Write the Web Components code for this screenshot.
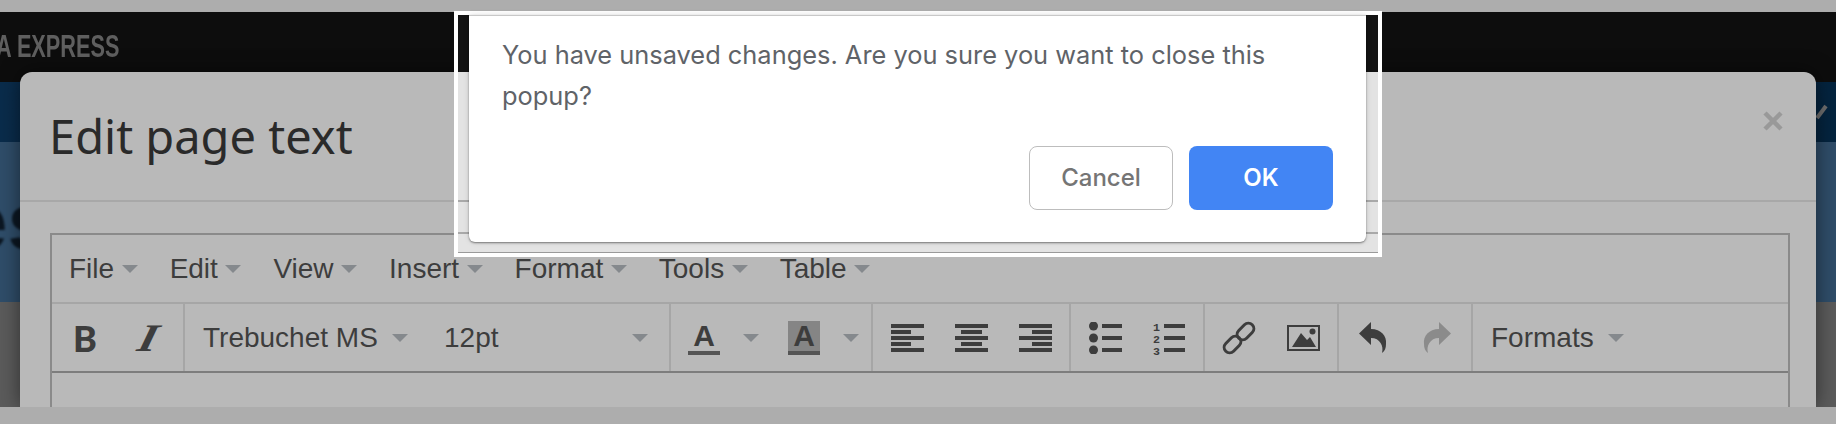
<!DOCTYPE html>
<html>
<head>
<meta charset="utf-8">
<title>Edit page text</title>
<style>
html, body { margin: 0; height: 424px; overflow: hidden; background: #adadad; }
body { font-family: "Liberation Sans", Arial, sans-serif; }
</style>
</head>
<body>
<site-page>
  <edit-modal slot="modal" title-text="Edit page text">
    <text-editor></text-editor>
  </edit-modal>
  <confirm-box slot="confirm">You have unsaved changes. Are you sure you want to close this popup?</confirm-box>
</site-page>

<script>
const caretCss = `
  .caret { width: 0; height: 0; border-left: 8px solid transparent; border-right: 8px solid transparent; border-top: 8px solid #85898d; flex: none; }
`;

class SitePage extends HTMLElement {
    constructor() {
        super();
        this.attachShadow({ mode: "open" });
        this.shadowRoot.innerHTML = `
        <style>
        :host { display: flex; flex-direction: column; position: relative; width: 1836px; height: 424px; overflow: hidden; }
        .strip { height: 12px; background: #adadad; flex: none; }
        .strip.bottom { height: 17px; position: relative; z-index: 2; }
        .brand { height: 70px; background: #0d0d0d; flex: none; color: #5f5f5f; display: flex; padding-top: 17px; box-sizing: border-box; overflow: hidden; }
        .brand span { font: bold 31px/36px "Liberation Sans", sans-serif; white-space: nowrap; margin-left: -4px; transform: scaleX(.7); transform-origin: left; filter: blur(.4px); }
        .nav { height: 60px; flex: none; background: linear-gradient(90deg, #0a2c4b, #04243f); overflow: hidden; display: flex; justify-content: flex-end; }
        .nav svg { margin: 18px 0 0; }
        .hero { height: 160px; flex: none; background: #2f4d69; overflow: hidden; color: #0c1722; }
        .hero span { display: block; font: bold 80px/70px "Liberation Sans", sans-serif; margin: 45px 0 0 -37px; filter: blur(.8px); }
        .rest { flex: 1; background: #5b5b5b; }
        </style>
        <div class="strip"></div>
        <div class="brand"><span>A EXPRESS</span></div>
        <div class="nav"><svg width="20" height="24" viewBox="0 0 20 24"><path d="M1 18 L10 6" stroke="#6f6f6f" stroke-width="4" fill="none"/></svg></div>
        <div class="hero"><span>es</span></div>
        <div class="rest"></div>
        <div class="strip bottom"></div>
        <slot name="modal"></slot>
        <slot name="confirm"></slot>
        `;
    }
}

class EditModal extends HTMLElement {
    constructor() {
        super();
        this.attachShadow({ mode: "open" });
        this.shadowRoot.innerHTML = `
        <style>
        :host { display: block; position: absolute; left: 20px; top: 72px; width: 1796px; height: 335px; background: #b9b9b9; border-radius: 12px 12px 0 0; box-shadow: 0 0 20px rgba(0,0,0,.5); z-index: 1; }
        .inner { height: 100%; overflow: hidden; display: flex; flex-direction: column; }
        header { height: 128px; flex: none; border-bottom: 2px solid #a8a8a8; display: flex; align-items: center; justify-content: space-between; padding: 0 33px 0 29px; }
        h1 { margin: 0; font: 400 47px/60px "Noto Sans", Lato, sans-serif; color: #2a2a2a; }
        .close { margin: 0 0 30px; display: block; }
        .body { padding: 31px 26px 0 30px; flex: 1; }
        </style>
        <div class="inner">
          <header>
            <h1>${this.getAttribute("title-text")}</h1>
            <svg class="close" width="20" height="20" viewBox="0 0 20 20"><path d="M2 2 L18 18 M18 2 L2 18" stroke="#999" stroke-width="4.5"/></svg>
          </header>
          <div class="body"><slot></slot></div>
        </div>
        `;
    }
}

class TextEditor extends HTMLElement {
    constructor() {
        super();
        this.attachShadow({ mode: "open" });
        const menus = ["File", "Edit", "View", "Insert", "Format", "Tools", "Table"];
        const digit = (n, y) => `<text x="0" y="${y}" font-family="Liberation Mono" font-weight="bold" font-size="10.500" textLength="7" lengthAdjust="spacingAndGlyphs">${n}</text>`;
        this.shadowRoot.innerHTML = `
        <style>
        :host { display: block; border: 2px solid #8a8a8a; border-bottom: 0; height: 200px; color: #3d3d3d; font: 28px/34px "Liberation Sans", Arial, sans-serif; }
        ${caretCss}
        .menubar { height: 69px; box-sizing: border-box; border-bottom: 2px solid #a6a6a6; display: flex; padding-left: 1px; }
        .menu { display: flex; align-items: center; gap: 7.500px; padding: 0 16px; }
        .toolbar { height: 69px; box-sizing: border-box; border-bottom: 2px solid #7d7d7d; display: flex; }
        .group { display: flex; padding: 0 2px; border-left: 2px solid #a6a6a6; }
        .group:first-child { border-left: 0; padding-left: 1px; }
        .i { font: italic bold 39px/36px "Liberation Serif", serif; display: block; transform: skewX(-14deg) scaleX(1.25); }
        </style>
        <div class="menubar">
          ${menus.map(m => `<div class="menu">${m}<span class="caret"></span></div>`).join("")}
        </div>
        <div class="toolbar">
          <div class="group">
            <tool-btn><span style="font:900 36px/36px Lato,sans-serif">B</span></tool-btn>
            <tool-btn><span class="i">I</span></tool-btn>
          </div>
          <div class="group" style="padding:0">
            <select-btn style="width:242px">Trebuchet MS</select-btn>
            <select-btn style="width:242px" wide>12pt</select-btn>
          </div>
          <div class="group" style="padding:0">
            <color-btn></color-btn>
            <color-btn hl></color-btn>
          </div>
          <div class="group">
            <tool-btn><svg width="33" height="28" viewBox="0 0 33 28" fill="#3d3d3d"><rect width="33" height="4"/><rect y="6" width="20" height="4"/><rect y="12" width="33" height="4"/><rect y="18" width="20" height="4"/><rect y="24" width="33" height="4"/></svg></tool-btn>
            <tool-btn><svg width="33" height="28" viewBox="0 0 33 28" fill="#3d3d3d"><rect width="33" height="4"/><rect x="6" y="6" width="21" height="4"/><rect y="12" width="33" height="4"/><rect x="6" y="18" width="21" height="4"/><rect y="24" width="33" height="4"/></svg></tool-btn>
            <tool-btn><svg width="33" height="28" viewBox="0 0 33 28" fill="#3d3d3d"><rect width="33" height="4"/><rect x="13" y="6" width="20" height="4"/><rect y="12" width="33" height="4"/><rect x="13" y="18" width="20" height="4"/><rect y="24" width="33" height="4"/></svg></tool-btn>
          </div>
          <div class="group">
            <tool-btn><svg width="33" height="32" viewBox="0 0 33 32" fill="#3d3d3d"><circle cx="4.500" cy="4" r="4.500"/><circle cx="4.500" cy="16" r="4.500"/><circle cx="4.500" cy="28" r="4.500"/><rect x="13" y="2" width="20" height="4"/><rect x="13" y="14" width="20" height="4"/><rect x="13" y="26" width="20" height="4"/></svg></tool-btn>
            <tool-btn><svg width="32" height="40" viewBox="0 0 32 40" fill="#3d3d3d">${digit(1, 13)}${digit(2, 25)}${digit(3, 37)}<rect x="11" y="6" width="21" height="4"/><rect x="11" y="18" width="21" height="4"/><rect x="11" y="30" width="21" height="4"/></svg></tool-btn>
          </div>
          <div class="group">
            <tool-btn><svg width="34" height="34" viewBox="0 0 34 34" fill="none" stroke="#3d3d3d" stroke-width="3"><rect x="14" y="5" width="19" height="11" rx="5.500" transform="rotate(-45 23.500 10.500)"/><rect x="1" y="18" width="19" height="11" rx="5.500" transform="rotate(-45 10.500 23.500)"/></svg></tool-btn>
            <tool-btn><svg width="33" height="26" viewBox="0 0 33 26"><rect x="1" y="1" width="31" height="24" fill="none" stroke="#3d3d3d" stroke-width="2"/><path d="M5 22 L14 8 L20 15 L23 12 L29 22 Z" fill="#3d3d3d"/><circle cx="25.500" cy="6.500" r="3" fill="#3d3d3d"/></svg></tool-btn>
          </div>
          <div class="group">
            <tool-btn><svg width="28" height="32" viewBox="0 0 28 32"><path d="M0 11.500 L12 0 V7 C22 7 28 14 27 22 C27 26 26 29 23 31 C25 24 21 16 12 16 V23 Z" fill="#3d3d3d"/></svg></tool-btn>
            <tool-btn><svg width="28" height="32" viewBox="0 0 28 32"><path d="M28 11.500 L16 0 V7 C6 7 0 14 1 22 C1 26 2 29 5 31 C3 24 7 16 16 16 V23 Z" fill="#8b8b8b"/></svg></tool-btn>
          </div>
          <div class="group" style="padding:0">
            <select-btn>Formats</select-btn>
          </div>
        </div>
        `;
    }
}

class ToolBtn extends HTMLElement {
    constructor() {
        super();
        this.attachShadow({ mode: "open" });
        this.shadowRoot.innerHTML = `
        <style>
        :host { display: flex; align-items: center; justify-content: center; width: 64px; height: 67px; color: #3d3d3d; }
        </style>
        <slot></slot>
        `;
    }
}

class SelectBtn extends HTMLElement {
    constructor() {
        super();
        this.attachShadow({ mode: "open" });
        this.shadowRoot.innerHTML = `
        <style>
        :host { display: flex; align-items: center; gap: 14px; height: 67px; padding: 0 21px 0 18px; box-sizing: border-box; white-space: nowrap; }
        :host([wide]) { justify-content: space-between; padding-left: 17px; }
        span:first-child { padding-top: 2px; }
        ${caretCss}
        </style>
        <span><slot></slot></span><span class="caret"></span>
        `;
    }
}

class ColorBtn extends HTMLElement {
    constructor() {
        super();
        this.attachShadow({ mode: "open" });
        this.shadowRoot.innerHTML = `
        <style>
        :host { display: flex; align-items: center; gap: 23px; width: 100px; height: 67px; padding-left: 17px; box-sizing: border-box; }
        ${caretCss}
        .icon { width: 32px; height: 34px; display: flex; flex-direction: column; justify-content: flex-end; align-items: center; font: bold 30px/30px "Liberation Sans", sans-serif; color: #3d3d3d; }
        :host([hl]) .icon { background: #858585; }
        .bar { width: 32px; height: 4px; background: #555; flex: none; }
        </style>
        <div class="icon"><span>A</span><div class="bar"></div></div>
        <span class="caret"></span>
        `;
    }
}

class ConfirmBox extends HTMLElement {
    constructor() {
        super();
        this.attachShadow({ mode: "open" });
        this.shadowRoot.innerHTML = `
        <style>
        :host { display: block; position: absolute; left: 454px; top: 11px; width: 928px; height: 246px; box-sizing: border-box; border: 4px solid #fff; z-index: 3;
          background:
            linear-gradient(#131313, #131313) top / 100% 57px no-repeat,
            linear-gradient(#a9a9a9, #a9a9a9) 0 185px / 100% 2px no-repeat,
            linear-gradient(#a9a9a9, #a9a9a9) 0 217px / 100% 2px no-repeat,
            linear-gradient(#9a9a9a, #9a9a9a) bottom / 100% 1px no-repeat,
            #e3e3e3; }
        .dialog { background: #fff; margin: 0 12px 0 11px; height: 227px; box-sizing: border-box; padding: 18px 33px 0 33px; border-radius: 0 0 6px 6px; border-top: 1px solid #c8c8c8; box-shadow: 0 1px 2px rgba(0,0,0,.45), 0 0 6px rgba(0,0,0,.12); }
        p { margin: 0; font: 400 25.400px/41px Inter, "Noto Sans", sans-serif; color: #5f6368; }
        .actions { display: flex; justify-content: flex-end; gap: 16px; margin-top: 30px; }
        .btn { width: 144px; height: 64px; box-sizing: border-box; border-radius: 8px; display: flex; align-items: center; justify-content: center; font: 600 24px/30px Inter, "Noto Sans", sans-serif; }
        .cancel { border: 1.500px solid #bdbdbd; color: #757575; font-weight: 500; }
        .ok { background: #4285f4; color: #fff; }
        </style>
        <div class="dialog">
          <p><slot></slot></p>
          <div class="actions">
            <div class="btn cancel">Cancel</div>
            <div class="btn ok">OK</div>
          </div>
        </div>
        `;
    }
}

customElements.define("site-page", SitePage);
customElements.define("edit-modal", EditModal);
customElements.define("text-editor", TextEditor);
customElements.define("tool-btn", ToolBtn);
customElements.define("select-btn", SelectBtn);
customElements.define("color-btn", ColorBtn);
customElements.define("confirm-box", ConfirmBox);
</script>
</body>
</html>
